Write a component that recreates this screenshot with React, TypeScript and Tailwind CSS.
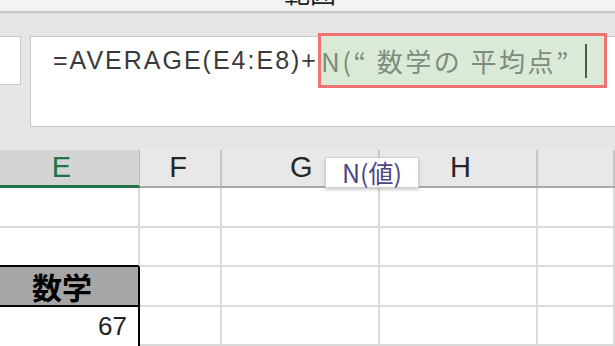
import React from 'react';

const cols = [
  { key: 'E', w: 'w-[140px]' },
  { key: 'F', w: 'w-[82px]' },
  { key: 'G', w: 'w-[158px]' },
  { key: 'H', w: 'w-[158px]' },
  { key: 'I', w: 'flex-1' },
];

const jp = "font-['Noto_Sans_CJK_JP',sans-serif]";

const App: React.FC = () => {
  return (
    <div className="relative w-[615px] h-[346px] overflow-hidden bg-[#e6e6e6] font-['Liberation_Sans','Noto_Sans_CJK_JP',sans-serif]">
      {/* window title, cut off at the top */}
      <div className="h-[11px] bg-[#f3f3f3] overflow-hidden flex items-end pl-[284px]">
        <span className={`${jp} text-[26px] leading-none text-[#222] mb-[6px]`}>範囲</span>
      </div>
      <div className="h-[3px] bg-gradient-to-b from-[#bdbdbd] to-[#e2e2e2]" />

      {/* formula bar */}
      <div className="flex gap-[9px] pt-[22px]">
        <div className="w-[21px] h-[49px] bg-white border border-l-0 border-[#c8c8c8]" />
        <div className="flex-1 h-[91px] bg-white border border-r-0 border-[#c8c8c8]">
          <div className="flex items-center h-[55px] -mt-[4px] pl-[22px]">
            <span className="text-[25px] tracking-[2px] text-[#3a3a3a] whitespace-nowrap">=AVERAGE(E4:E8)+</span>
            <div className="flex items-center h-[55px] w-[289px] border-[3px] border-[#f07272] bg-[#d9ebd7] whitespace-nowrap">
              <span className={`${jp} text-[26px] text-[#7d8c7c] tracking-[2.5px]`}>N(“ 数学の 平均点”</span>
              <span className="ml-[14px] w-[2px] h-[34px] bg-[#4d5a4c]" />
            </div>
          </div>
        </div>
      </div>

      {/* column headers */}
      <div className="mt-[23px] flex h-[38px] bg-[#e8e8e8] border-b-2 border-[#a9a9a9]">
        {cols.map((c) =>
          c.key === 'E' ? (
            <div key={c.key} className={`${c.w} -mb-[2px] flex items-center justify-center pr-[16px] bg-[#d4d4d4] border-b-[3px] border-[#217346] border-r border-r-[#bcbcbc] text-[29px] text-[#217346]`}>
              E
            </div>
          ) : (
            <div key={c.key} className={`${c.w} flex items-center justify-center border-r-2 border-[#c6c6c6] text-[29px] text-[#262626] ${c.key === 'G' ? 'justify-start pl-[68px]' : ''} ${c.key === 'H' ? 'justify-start pl-[70px]' : ''} ${c.key === 'F' ? 'pr-[4px]' : ''}`}>
              {c.key === 'I' ? '' : c.key}
            </div>
          )
        )}
      </div>

      {/* sheet rows */}
      <div className="bg-white">
        {[40, 39].map((h, r) => (
          <div key={r} className="flex" style={{ height: h }}>
            {cols.map((c) => (
              <div
                key={c.key}
                className={`${c.w} border-r-2 border-b-2 border-[#dadada] ${c.key === 'E' && r === 1 ? 'border-b-black' : ''}`}
              />
            ))}
          </div>
        ))}
        <div className="flex h-[40px]">
          <div className={`w-[140px] flex items-center justify-center pr-[14px] bg-[#a6a6a6] border-r-2 border-b-2 border-black ${jp} font-bold text-[30px] leading-none text-black`}>
            数学
          </div>
          {cols.slice(1).map((c) => (
            <div key={c.key} className={`${c.w} border-r-2 border-b-2 border-[#dadada]`} />
          ))}
        </div>
        <div className="flex h-[39px]">
          <div className="w-[140px] flex items-center justify-end pr-[11px] border-r-2 border-black text-[26px] text-[#222]">
            67
          </div>
          {cols.slice(1).map((c) => (
            <div key={c.key} className={`${c.w} border-r-2 border-b-2 border-[#dadada]`} />
          ))}
        </div>
      </div>

      {/* function tooltip */}
      <div className={`absolute left-[325px] top-[157px] w-[94px] h-[31px] flex items-center justify-center bg-white border border-[#cfcfcf] shadow-[0_2px_3px_rgba(0,0,0,0.2)] ${jp} text-[25px] text-[#4d4683]`}>
        N(値)
      </div>
    </div>
  );
};

export default App;
